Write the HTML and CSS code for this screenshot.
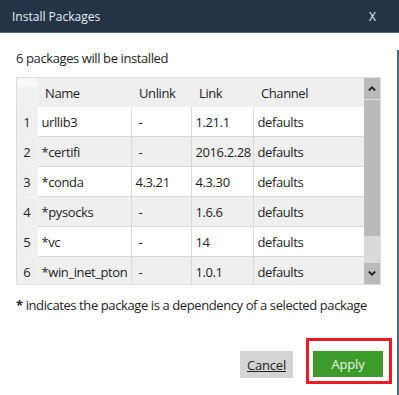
FILE: index.html
```html
<!DOCTYPE html>
<html lang="en">
<head>
<meta charset="utf-8">
<title>Install Packages</title>
<link rel="stylesheet" href="styles.css">
</head>
<body>
<div class="dialog">
  <div class="titlebar">
    <span class="title">Install Packages</span>
    <span class="close">X</span>
  </div>
  <div class="content">
    <p class="summary">6 packages will be installed</p>
    <div class="grid-wrap">
      <table class="pkgs">
        <colgroup>
          <col class="c-num"><col class="c-name"><col class="c-unlink"><col class="c-link"><col class="c-channel">
        </colgroup>
        <thead>
          <tr><th class="corner"></th><th>Name</th><th>Unlink</th><th>Link</th><th>Channel</th></tr>
        </thead>
        <tbody>
          <tr><td class="num">1</td><td>urllib3</td><td class="dash">-</td><td>1.21.1</td><td>defaults</td></tr>
          <tr class="alt"><td class="num">2</td><td>*certifi</td><td class="dash">-</td><td>2016.2.28</td><td>defaults</td></tr>
          <tr><td class="num">3</td><td>*conda</td><td>4.3.21</td><td>4.3.30</td><td>defaults</td></tr>
          <tr class="alt"><td class="num">4</td><td>*pysocks</td><td class="dash">-</td><td>1.6.6</td><td>defaults</td></tr>
          <tr><td class="num">5</td><td>*vc</td><td class="dash">-</td><td>14</td><td>defaults</td></tr>
          <tr class="alt"><td class="num">6</td><td>*win_inet_pton</td><td class="dash">-</td><td>1.0.1</td><td>defaults</td></tr>
        </tbody>
      </table>
      <div class="scrollbar">
        <div class="sb-btn">
          <svg width="8" height="5" viewBox="0 0 8 5"><polyline points="0.8,4.5 4,1.3 7.2,4.5" fill="none" stroke="#222" stroke-width="1.8"/></svg>
        </div>
        <div class="sb-thumb"></div>
        <div class="sb-track"></div>
        <div class="sb-btn">
          <svg width="8" height="5" viewBox="0 0 8 5"><polyline points="0.8,0.5 4,3.7 7.2,0.5" fill="none" stroke="#222" stroke-width="1.8"/></svg>
        </div>
      </div>
    </div>
    <p class="note"><b>*</b> indicates the package is a dependency of a selected package</p>
    <div class="actions">
      <button class="btn cancel"><u>Cancel</u></button>
      <div class="highlight"><button class="btn apply">Apply</button></div>
    </div>
  </div>
</div>
</body>
</html>
```
FILE: styles.css
```css
html, body {
  margin: 0;
  padding: 0;
  background: #ffffff;
}
body {
  font-family: "Open Sans", "Noto Sans", sans-serif;
  font-size: 13px;
  letter-spacing: -0.4px;
  color: #1e1e1e;
}
.dialog {
  width: 399px;
  height: 395px;
  box-sizing: border-box;
  overflow: hidden;
}
.titlebar {
  height: 32px;
  background: #243446;
  border-bottom: 1px solid #4b6a84;
  display: flex;
  align-items: center;
  justify-content: space-between;
  padding: 0 23px 0 12px;
  color: #e8edf1;
  font-size: 12px;
  letter-spacing: 0;
}
.content {
  border-right: 2px solid #4b6a84;
  height: 362px;
  box-sizing: border-box;
  padding: 0 0 0 16px;
}
.summary {
  margin: 17px 0 10px;
  line-height: 17px;
}
.grid-wrap {
  width: 365px;
  height: 208px;
  box-sizing: border-box;
  border: 1px solid #dedede;
  display: flex;
  overflow: hidden;
}
.pkgs {
  border-collapse: collapse;
  table-layout: fixed;
  width: 347px;
}
.c-num { width: 20px; }
.c-name { width: 94px; }
.c-unlink { width: 60px; }
.c-link { width: 62px; }
.c-channel { width: 111px; }
.pkgs th {
  height: 29px;
  padding: 0 0 0 8px;
  background: #efefef;
  font-weight: normal;
  text-align: left;
}
.pkgs th.corner {
  background: linear-gradient(#f8f8f8 0 9px, #f1f1f1 9px);
  padding: 0;
}
.pkgs td {
  height: 29px;
  padding: 0 0 0 4px;
  background: #ffffff;
  border: 1px solid #dadada;
  white-space: nowrap;
  overflow: hidden;
}
.pkgs tr:first-child td { border-top: none; }
.pkgs td:last-child { border-right: none; }
.pkgs tr.alt td { background: #efefef; }
.pkgs td.num {
  background: #efefef;
  text-align: center;
  padding: 0;
  border-left: none;
  border-color: #f4f4f4;
}
.pkgs td.dash { padding-left: 7px; }
.scrollbar {
  width: 16px;
  display: flex;
  flex-direction: column;
  background: #dadada;
}
.sb-btn {
  height: 21px;
  background: #bababa;
  display: flex;
  align-items: center;
  justify-content: center;
}
.sb-thumb {
  margin-top: 1px;
  height: 136px;
  background: #bababa;
}
.sb-track {
  flex: 1;
}
.note {
  margin: 12px 0 0;
  line-height: 17px;
}
.note b { font-weight: bold; }
.actions {
  display: flex;
  justify-content: flex-end;
  align-items: flex-start;
  margin-top: 24px;
  padding-right: 5px;
}
.btn {
  border: none;
  height: 26px;
  font-family: inherit;
  font-size: 13px;
  letter-spacing: -0.2px;
  padding: 0;
  cursor: pointer;
}
.cancel {
  width: 53px;
  height: 27px;
  margin-top: 13px;
  margin-right: 13px;
  background: #d4d4d4;
  color: #1e1e1e;
}
.highlight {
  border: 3px solid #ea1b25;
  padding: 10px 6px 4px 4px;
}
.apply {
  width: 70px;
  background: #3c9b2b;
  color: #eaf3e2;
  display: block;
}
```
